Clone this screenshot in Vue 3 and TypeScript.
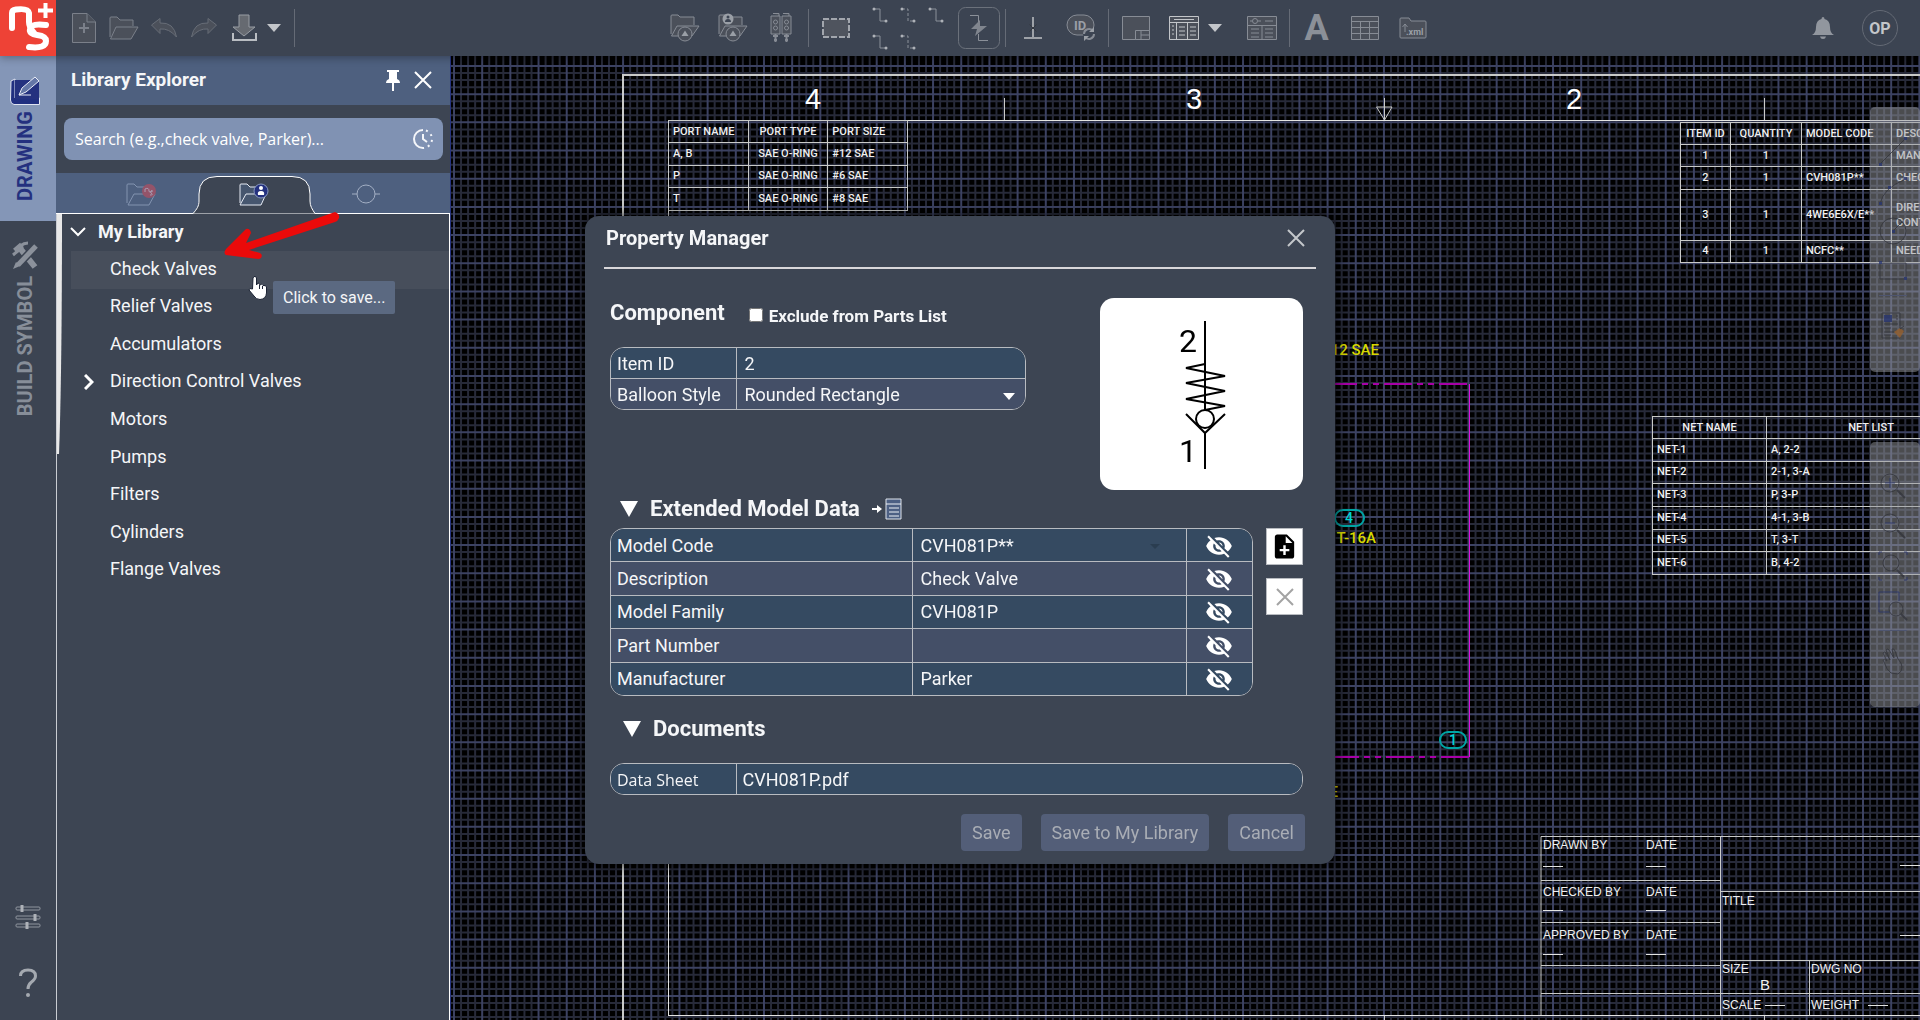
<script setup lang="ts">
import { ref } from 'vue'

interface TreeItem { name: string; branch?: boolean }
interface ModelRow { id: string; label: string; value: string }

const tree: TreeItem[] = [
  { name: 'Check Valves' },
  { name: 'Relief Valves' },
  { name: 'Accumulators' },
  { name: 'Direction Control Valves', branch: true },
  { name: 'Motors' },
  { name: 'Pumps' },
  { name: 'Filters' },
  { name: 'Cylinders' },
  { name: 'Flange Valves' },
]
const hovered = 'Check Valves'

const modelRows = ref<ModelRow[]>([
  { id: 'code', label: 'Model Code', value: 'CVH081P**' },
  { id: 'desc', label: 'Description', value: 'Check Valve' },
  { id: 'family', label: 'Model Family', value: 'CVH081P' },
  { id: 'part', label: 'Part Number', value: '' },
  { id: 'maker', label: 'Manufacturer', value: 'Parker' },
])

const search = ref('')
const exclude = ref(false)
const itemId = ref('2')
const balloon = ref('Rounded Rectangle')

const ports = [
  ['A, B', 'SAE O-RING', '#12 SAE'],
  ['P', 'SAE O-RING', '#6 SAE'],
  ['T', 'SAE O-RING', '#8 SAE'],
]
const parts = [
  ['1', '1', '', 'MANIFOLD'],
  ['2', '1', 'CVH081P**', 'CHECK VALVE'],
  ['3', '1', '4WE6E6X/E**', 'DIRECTIONAL CONTROL VALVE'],
  ['4', '1', 'NCFC**', 'NEEDLE VALVE'],
]
const nets = [
  ['NET-1', 'A, 2-2'],
  ['NET-2', '2-1, 3-A'],
  ['NET-3', 'P, 3-P'],
  ['NET-4', '4-1, 3-B'],
  ['NET-5', 'T, 3-T'],
  ['NET-6', 'B, 4-2'],
]

// Sheet grid: four fine divisions to each coarse one, on a 4096 px wide sheet.
const cell = 28.18
function gridPath(step: number, skip: number): string {
  let d = ''
  for (let i = 0; i * step < 4096; i++) {
    if (skip && i % skip === 0) continue
    const p = (i * step).toFixed(2)
    d += `M${p} -28V4096M-28 ${p}H4096`
  }
  return d
}
const fineGrid = gridPath(cell / 4, 4)
const coarseGrid = gridPath(cell, 0)
</script>

<template>
  <div class="app">
    <header class="topbar">
      <a class="logo" href="#" aria-label="Home">
        <svg width="56" height="56" viewBox="0 0 56 56" fill="none" stroke="#fff" stroke-linecap="round" stroke-linejoin="round">
          <path d="M12 28V13Q12 10 16 9.500Q28 8 29 13V22Q29 27 34 33" stroke-width="6" />
          <path d="M46 25Q31 23 30 29Q29 34 37 35Q46 36 46 41Q46 49 29 47" stroke-width="6" />
          <path d="M45.500 3V18M38 10.500H53" stroke-width="4" stroke-linecap="butt" />
        </svg>
      </a>
      <nav class="tools tools-file" aria-label="File">
        <button aria-label="New"><svg width="26" height="32" viewBox="0 0 26 32" class="dim"><path d="M1.500 1.500H16L24.500 10V30.500H1.500Z" /><path d="M16 1.500V10H24.500" /><path d="M13 11V21M8 16H18" stroke-width="2" /></svg></button>
        <button aria-label="Open"><svg width="32" height="26" viewBox="0 0 32 26" class="dim"><path d="M2 22V3Q2 2 3 2H9L12 5H25V11" /><path d="M8 12H30L23 24H2.500Z" /></svg></button>
        <button aria-label="Undo"><svg width="28" height="22" viewBox="0 0 28 22" class="dim faint"><path d="M1.500 8L10 1.500V6Q24 5 26.500 20Q19 11 10 12V16.500Z" /></svg></button>
        <button aria-label="Redo"><svg width="28" height="22" viewBox="0 0 28 22" class="dim faint"><path d="M26.500 8L18 1.500V6Q4 5 1.500 20Q9 11 18 12V16.500Z" /></svg></button>
        <button aria-label="Save"><svg width="28" height="28" viewBox="0 0 28 28"><path d="M9 1H19V13H25L14 22L3 13H9Z" fill="#666a71" stroke="#989da4" /><path d="M3 19V26H26V19" fill="none" stroke="#b9bdc2" stroke-width="2" /></svg></button>
        <button class="caret" aria-label="Save options"><svg width="14" height="8"><path d="M0 0H14L7 8Z" fill="#c3c6ca" /></svg></button>
        <span class="sep"></span>
      </nav>
      <nav class="tools tools-main" aria-label="Drawing tools">
        <button aria-label="Library folder"><svg width="32" height="32" viewBox="0 0 32 32" class="icn"><path d="M2 22V4Q2 3 3 3H9L11 5H25V13" /><path d="M8 14H30L23 24H2.500Z" /><circle cx="16" cy="22" r="7" /><path d="M12.500 24L16 18.500L19.500 24Z" class="solid" /></svg></button>
        <button aria-label="My library folder"><svg width="32" height="32" viewBox="0 0 32 32" class="icn"><path d="M2 22V4Q2 3 3 3H9L11 5H25V13" /><path d="M8 14H30L23 24H2.500Z" /><circle cx="16" cy="22" r="7" /><path d="M12.500 24L16 18.500L19.500 24Z" class="solid" /><circle cx="11" cy="7" r="5.500" class="solid" /><circle cx="11" cy="5" r="1.500" fill="#3c4452" stroke="none" /><path d="M8 10Q8 7 11 7Q14 7 14 10Z" fill="#3c4452" stroke="none" /></svg></button>
        <button aria-label="Manifold"><svg width="24" height="32" viewBox="0 0 24 32" class="icn"><path d="M2 4H11V22H2ZM13 4H22V22H13ZM4 1.500H10V4M14 1.500H20V4" /><circle cx="6.500" cy="10" r="2" /><circle cx="6.500" cy="16" r="2" /><circle cx="17.500" cy="10" r="2" /><circle cx="17.500" cy="16" r="2" /><path d="M6.500 22V30M17.500 22V30M4 24H9M15 24H20M5 28H8M16 28H19" stroke-width="2" /></svg></button>
        <span class="sep"></span>
        <button aria-label="Boundary"><svg width="30" height="22" viewBox="0 0 30 22"><rect x="2" y="2" width="26" height="18" fill="#4f545e" stroke="#a2a6ad" stroke-width="2" stroke-dasharray="6 2" /></svg></button>
        <div class="lines">
          <button v-for="n in 5" :key="n" :aria-label="'Line style ' + n">
            <svg width="16" height="16" viewBox="0 0 16 16"><path d="M2 2H8V14H14" fill="none" stroke="#8a9099" :stroke-dasharray="n === 2 || n === 5 ? '3 2' : undefined" /><circle cx="2" cy="2" r="1.500" fill="#aeb2b8" /><circle cx="14" cy="14" r="1.500" fill="#aeb2b8" /></svg>
          </button>
        </div>
        <button class="boxed" aria-label="Auto route"><svg width="42" height="42" viewBox="0 0 42 42" fill="none" stroke="#8b9099"><rect x=".5" y=".5" width="41" height="41" rx="7" stroke="#6b717b" /><path d="M12 8.500H20.500V15M20.500 27V33.500H30" /><path d="M22 13L13 22H19L17 29L29 19H22Z" fill="#80858e" stroke="none" /></svg></button>
        <span class="sep"></span>
        <button aria-label="Junction"><svg width="20" height="24" viewBox="0 0 20 24" fill="none"><path d="M10 1V22M1 22H19" stroke="#9ea2a8" stroke-width="2" /><path d="M6.500 8.500L13.500 15.500M13.500 8.500L6.500 15.500" stroke="#34383f" /></svg></button>
        <button aria-label="Refresh item IDs"><svg width="32" height="30" viewBox="0 0 32 30" class="icn"><rect x="2" y="2" width="27" height="20" rx="10" /><text x="9" y="17" class="idtext">ID</text><circle cx="24" cy="21" r="6" fill="#3c4452" stroke="none" /><path d="M19 21A5 5 0 0 1 28 18M29 21A5 5 0 0 1 20 24" fill="none" stroke-width="2" /><path d="M29 14V19H24ZM19 28V23H24Z" class="solid" /></svg></button>
        <span class="sep"></span>
        <button aria-label="Title block"><svg width="30" height="26" viewBox="0 0 30 26" class="icn"><path d="M1.500 1.500H28.500V24.500H1.500Z" /><path d="M14.500 24.500V15.500H28.500M20 16V24M20 20H28" /></svg></button>
        <button aria-label="Parts list"><svg width="32" height="26" viewBox="0 0 32 26" class="icn bright"><path d="M1.500 1.500H30.500V24.500H1.500ZM1.500 7.500H30.500M8.500 8V24M19.500 8V24" /><path d="M6 4.500H26M11 12H17M11 16H17M11 20H17M22 12H28M22 16H28M22 20H28M4 11H6M4 15H6M4 19H6" /></svg></button>
        <button class="caret list-caret" aria-label="Parts list options"><svg width="14" height="8"><path d="M0 0H14L7 8Z" fill="#c3c6ca" /></svg></button>
        <button aria-label="Symbol list"><svg width="32" height="26" viewBox="0 0 32 26" class="icn"><path d="M1.500 1.500H30.500V24.500H1.500ZM1.500 10.500H30.500M16 11V24" /><circle cx="9" cy="6" r="2.500" /><path d="M4 6H6M12 6H15M19 6H27M5 14H13M5 18H13M5 22H13M19 14H27M19 18H27M19 22H27" /></svg></button>
        <span class="sep"></span>
        <button class="letter" aria-label="Text">A</button>
        <button aria-label="Table"><svg width="30" height="26" viewBox="0 0 30 26" class="icn"><path d="M1.500 1.500H28.500V24.500H1.500ZM1.500 6.500H28.500M1.500 12.500H28.500M1.500 18.500H28.500M10.500 7V24M19.500 7V24" /></svg></button>
        <button aria-label="Export XML"><svg width="30" height="24" viewBox="0 0 30 24" class="icn"><path d="M2 3Q2 2 3 2H11L13 5H27Q28 5 28 6V21Q28 22 27 22H3Q2 22 2 21Z" /><path d="M7 16V8M4.500 11L7 8L9.500 11" /><text x="8" y="19" class="xmltext">.xml</text></svg></button>
      </nav>
      <nav class="tools tools-user" aria-label="Account">
        <button aria-label="Notifications"><svg width="24" height="24" viewBox="0 0 24 24" fill="#91969e"><path d="M12 1Q13.500 1 13.500 3Q19 4.500 19 11Q19 17 23 19H1Q5 17 5 11Q5 4.500 10.500 3Q10.500 1 12 1ZM9 20.500H15Q14.500 23 12 23Q9.500 23 9 20.500Z" /></svg></button>
        <button class="avatar">OP</button>
      </nav>
    </header>

    <div class="body">
      <nav class="rail" aria-label="Workspaces">
        <button class="rail-tab active">
          <svg width="32" height="30" viewBox="0 0 32 30"><path d="M2 5L6 3V22H30.500V28.500H5Q1.500 28 1.500 24Z" fill="#202f80" stroke="#dfe4f2" /><path d="M6 4H30V23H6Z" fill="#24317f" /><path d="M10 19L13 12L26 1L30 5L17 16Z" fill="#6476a6" stroke="#e9edf7" /><path d="M10 19H22" stroke="#e9edf7" /></svg>
          <span class="rail-text">DRAWING</span>
        </button>
        <button class="rail-tab">
          <svg width="30" height="30" viewBox="0 0 30 30" fill="none" stroke="#8b919b"><path d="M5 10L12 4M9 6L25 26" stroke-width="6" /><path d="M3 14L9 9M10 5Q14 2 18 2" stroke-width="3" /><path d="M26 5L8 24" stroke="#3c4452" stroke-width="8" /><path d="M26 5L8 24" stroke-width="5" /><path d="M3 28L6 21L10 25Z" fill="#8b919b" stroke="none" /></svg>
          <span class="rail-text">BUILD SYMBOL</span>
        </button>
        <span class="rail-gap"></span>
        <button class="rail-btn" aria-label="Settings"><svg width="26" height="26" viewBox="0 0 26 26" fill="none" stroke="#8f959e"><rect x="1" y="3" width="24" height="3" rx="1" /><rect x="1" y="12" width="24" height="3" rx="1" /><rect x="1" y="20" width="24" height="3" rx="1" /><path d="M7 1V8M20 10V17M12 18V25" stroke="#aeb2b8" stroke-width="3" /></svg></button>
        <button class="rail-btn" aria-label="Help"><svg width="20" height="30" viewBox="0 0 20 30"><path d="M2.500 8Q2.500 2 10 2Q17.500 2 17.500 8Q17.500 11 13 14.500Q10 17 10 21" fill="none" stroke="#a4a9b0" stroke-width="3" /><circle cx="10" cy="27" r="2" fill="#a4a9b0" /></svg></button>
      </nav>

      <aside class="panel">
        <div class="panel-head">
          <h2>Library Explorer</h2>
          <button aria-label="Pin"><svg width="16" height="22" viewBox="0 0 16 22"><path d="M2 1H14V3H12V10Q15 11 15 14H9V22H7V14H1Q1 11 4 10V3H2Z" fill="#fff" /></svg></button>
          <button aria-label="Close panel"><svg width="18" height="18" viewBox="0 0 18 18"><path d="M1 1L17 17M17 1L1 17" stroke="#fff" stroke-width="2" /></svg></button>
        </div>
        <div class="search">
          <input v-model="search" type="text" aria-label="Search library" placeholder="Search (e.g.,check valve, Parker)..." />
          <button aria-label="Recent searches"><svg width="22" height="22" viewBox="0 0 22 22" fill="none" stroke="#f4f6fa" stroke-width="2"><path d="M11 2A9 9 0 0 0 11 20" /><path d="M11 2A9 9 0 0 1 11 20" stroke-dasharray="2 4" stroke-dashoffset="-3" /><path d="M11 6V11L15 14" /></svg></button>
        </div>
        <div class="tabs">
          <svg class="tab-shape" width="122" height="41" viewBox="0 0 122 41"><path d="M0 40.500C4 36 6 33 6 28V21Q6 3.500 24 3.500H99Q117 3.500 117 21V28C117 33 119 36 122 40.500" fill="#3d4553" stroke="#fff" /></svg>
          <button aria-label="Standard library"><svg width="34" height="26" viewBox="0 0 34 26" fill="none" stroke="#8293b0"><path d="M2 22V4Q2 3 3 3H9L12 6H25V12M9 13H30L24 24H3Z" /><circle cx="24" cy="10" r="7" fill="#94546a" stroke="none" /><path d="M20 11V8Q24 6 24 10Q25 13 27 9M28 10Q24 10 26 12Q29 14 25 14" stroke="#a99bb0" /></svg></button>
          <button aria-label="My library"><svg width="34" height="26" viewBox="0 0 34 26" fill="none" stroke="#e6ebf5"><path d="M3 22V4Q3 3 4 3H10L13 6H26V12M9 13H29L24 24H3Z" fill="#46566f" /><circle cx="24" cy="10" r="7" fill="#24317f" stroke="#8796bd" /><circle cx="24" cy="7" r="2" fill="#fff" stroke="none" /><path d="M21 14Q20 10 24 10Q28 10 27 14Z" fill="#fff" stroke="none" /></svg></button>
          <button aria-label="Symbols"><svg width="30" height="20" viewBox="0 0 30 20" fill="none" stroke="#a3afc4"><circle cx="15" cy="10" r="9" /><path d="M1 10H6M24 10H29" /></svg></button>
        </div>
        <div class="tree">
          <svg class="thumb" width="7" height="240" viewBox="0 0 7 240"><path d="M1 0H6Q6 160 3 240H1Z" fill="#e8e8e8" /></svg>
          <button class="tree-root">
            <svg width="16" height="10" viewBox="0 0 16 10"><path d="M1 1L8 8L15 1" fill="none" stroke="#fff" stroke-width="2" /></svg>
            My Library
          </button>
          <ul>
            <li v-for="item in tree" :key="item.name" :class="{ hover: item.name === hovered }">
              <button>
                <svg v-if="item.branch" width="10" height="16" viewBox="0 0 10 16"><path d="M1 1L8 8L1 15" fill="none" stroke="#fff" stroke-width="3" /></svg>
                {{ item.name }}
              </button>
            </li>
          </ul>
          <div class="tip" role="tooltip">Click to save...</div>
          <svg class="pointer" width="20" height="26" viewBox="0 0 20 26"><path d="M6 1.500Q8 1 8.500 3V10L10 8Q11.500 8 12 10Q14 8 15 10.500Q18 10 18.500 12V18Q18 24 12 24.500Q8 24.500 6 21L1 15Q1 12.500 4.500 14L5 3Z" fill="#fff" stroke="#1d2435" /><path d="M11.500 10V14M14.500 11V14" stroke="#1d2435" /></svg>
          <svg class="arrow" width="120" height="54" viewBox="0 0 120 54"><path d="M112 5Q117 7 116 11Q115 14 112 15L26 43L37 46Q40 48 38 51L36 52L3 48Q0 46 3 42L23 22Q27 21 28 26L23 36Z" fill="#ea0a0a" /></svg>
        </div>
      </aside>

      <main class="canvas">
        <svg class="sheet" width="100%" height="100%">
          <g transform="translate(-451 -56)">
            <g transform="translate(454 66)">
              <path :d="fineGrid" stroke="#272a39" stroke-width="2" />
              <path :d="coarseGrid" stroke="#3c4262" stroke-width="2" />
            </g>
            <g fill="none" stroke="#c9cac8">
              <path d="M623 1020V75H2400" stroke-width="2" />
              <path d="M668.500 1015V120.500H2400M668 1015.500H2400" stroke="#e4e4e2" />
              <path d="M1004.500 98V120M1384.500 98V120M1764.500 98V120M1376.500 107H1392L1384.500 120ZM1384.500 1016V1020M1764.500 1016V1020" />
              <path d="M1541 1015V836.500H2100M1720.500 836V1015M1541 880.500H1720M1541 922.500H1720M1541 965.500H1720M1541 993.500H2100M1720 891.500H2100M1720 960.500H2100M1809.500 960V1015" />
              <path d="M1543 866.500H1563M1646 866.500H1666M1543 910.500H1563M1646 910.500H1666M1543 954.500H1563M1646 954.500H1666M1900 865.500H1920M1900 935.500H1920M1765 1005.500H1785M1868 1005.500H1888" stroke="#e4e4e2" />
            </g>
            <g class="zone">
              <text x="813" y="109">4</text><text x="1194" y="109">3</text><text x="1574" y="109">2</text>
            </g>
            <g class="block">
              <text x="1543" y="849">DRAWN BY</text><text x="1646" y="849">DATE</text>
              <text x="1543" y="896">CHECKED BY</text><text x="1646" y="896">DATE</text>
              <text x="1543" y="939">APPROVED BY</text><text x="1646" y="939">DATE</text>
              <text x="1722" y="905">TITLE</text><text x="1722" y="973">SIZE</text>
              <text x="1811" y="973">DWG NO</text><text x="1722" y="1009">SCALE</text>
              <text x="1811" y="1009">WEIGHT</text><text x="1760" y="990" class="size-b">B</text>
            </g>
            <path d="M1469.500 384V757" stroke="#e010e0" />
            <path d="M1467 384H1200M1469 757H1200" stroke="#a800a8" stroke-width="2" stroke-dasharray="28 5 6 5 6 5" />
            <g fill="none" stroke="#00a5a5" stroke-width="2">
              <rect x="1335" y="510" width="29" height="16" rx="8" /><rect x="1440" y="732" width="26" height="16" rx="8" />
            </g>
            <g class="bal"><text x="1349" y="523">4</text><text x="1453" y="745">1</text></g>
            <g class="note"><text x="1379" y="355">#12 SAE</text><text x="1376" y="543">T-16A</text><text x="1338" y="797">#8 SAE</text></g>
          </g>
        </svg>

        <table class="cad port-table">
          <thead><tr><th>PORT NAME</th><th>PORT TYPE</th><th>PORT SIZE</th></tr></thead>
          <tbody><tr v-for="r in ports" :key="r[0]"><td v-for="(c, i) in r" :key="i">{{ c }}</td></tr></tbody>
        </table>
        <table class="cad parts-table">
          <thead><tr><th>ITEM ID</th><th>QUANTITY</th><th>MODEL CODE</th><th>DESCRIPTION</th></tr></thead>
          <tbody><tr v-for="r in parts" :key="r[0]" :class="{ tall: r[0] === '3' }"><td v-for="(c, i) in r" :key="i">{{ c }}</td></tr></tbody>
        </table>
        <table class="cad net-table">
          <thead><tr><th>NET NAME</th><th>NET LIST</th></tr></thead>
          <tbody><tr v-for="r in nets" :key="r[0]"><td v-for="(c, i) in r" :key="i">{{ c }}</td></tr></tbody>
        </table>

        <div class="float draw-tools">
          <button aria-label="Line"><svg width="30" height="30" viewBox="0 0 30 30"><path d="M2 28L28 2" /><path d="M1 27H4V30H1ZM26 1H29V4H26Z" class="dot" /></svg></button>
          <button aria-label="Arc"><svg width="30" height="30" viewBox="0 0 30 30"><path d="M2 28Q5 12 28 3" /><path d="M1 26H4V29H1ZM10 10H13V13H10ZM26 1H29V4H26Z" class="dot" /></svg></button>
          <button aria-label="Circle"><svg width="30" height="30" viewBox="0 0 30 30"><circle cx="15" cy="15" r="13" /><path d="M15 15L24 6" /><path d="M14 14H17V17H14Z" class="dot" /></svg></button>
          <button aria-label="Rectangle"><svg width="30" height="22" viewBox="0 0 30 22"><path d="M2 3H28V19H2Z" /><path d="M1 1H4V4H1ZM26 17H29V20H26Z" class="dot" /></svg></button>
          <span class="rule"></span>
          <button aria-label="Format painter"><svg width="28" height="30" viewBox="0 0 28 30"><path d="M3 2H21V27H3ZM5 13H19M5 17H12M5 21H15M5 24H12M17 5H19M17 8H19" /><path d="M5 4H13V11H5Z" class="dot" /><path d="M15 21L21 17L25 20L21 27Z" fill="#96602f" stroke="none" /><path d="M21 18L25 15" /></svg></button>
        </div>
        <div class="float zoom-tools">
          <button aria-label="Zoom in"><svg width="30" height="30" viewBox="0 0 30 30"><circle cx="12" cy="12" r="9" /><path d="M19 19L27 27" stroke-width="2" /><path d="M12 7V17M7 12H17" stroke="#28356f" /></svg></button>
          <button aria-label="Zoom out"><svg width="30" height="30" viewBox="0 0 30 30"><circle cx="12" cy="12" r="9" /><path d="M19 19L27 27" stroke-width="2" /><path d="M7 12H17" stroke="#28356f" /></svg></button>
          <button aria-label="Zoom to fit"><svg width="30" height="30" viewBox="0 0 30 30"><circle cx="13" cy="12" r="8" /><path d="M19 19L26 26" stroke-width="2" /><path d="M1 4V1H4M26 1H29V4M1 26V29H4M26 29H29V26" stroke="#28356f" /></svg></button>
          <button aria-label="Zoom window"><svg width="30" height="30" viewBox="0 0 30 30"><path d="M12 21H1V1H21V10" stroke="#28356f" /><circle cx="18" cy="18" r="7" /><path d="M23 23L29 29" stroke-width="2" /></svg></button>
          <span class="rule"></span>
          <button aria-label="Pan"><svg width="22" height="28" viewBox="0 0 22 28"><path d="M9 26Q4 22 3 17L1 13Q2 11 5 14L1 6Q2 4 4 6L8 13L4 3Q6 1 7 3L12 11L10 2Q12 1 13 4L16 12Q20 16 20 20Q20 25 16 27Z" /></svg></button>
        </div>
      </main>
    </div>

    <div class="overlay">
      <section class="dialog" role="dialog" aria-labelledby="pm-title">
        <header class="dialog-head">
          <h1 id="pm-title">Property Manager</h1>
          <button aria-label="Close"><svg width="18" height="18" viewBox="0 0 18 18"><path d="M1 1L17 17M17 1L1 17" stroke="#c4c7cb" stroke-width="2" /></svg></button>
        </header>
        <div class="dialog-body">
          <div class="component">
            <div class="component-data">
              <div class="component-title">
                <h2>Component</h2>
                <input id="exclude" v-model="exclude" type="checkbox" />
                <label for="exclude">Exclude from Parts List</label>
              </div>
              <div class="frame">
                <table class="grid item-grid">
                  <tbody>
                    <tr><th scope="row"><label for="item-id">Item ID</label></th><td><input id="item-id" v-model="itemId" type="text" /></td></tr>
                    <tr>
                      <th scope="row"><label for="balloon">Balloon Style</label></th>
                      <td>
                        <div class="picker">
                          <select id="balloon" v-model="balloon"><option>Rounded Rectangle</option><option>Circle</option></select>
                          <svg width="12" height="7"><path d="M0 0H12L6 7Z" fill="#fff" /></svg>
                        </div>
                      </td>
                    </tr>
                  </tbody>
                </table>
              </div>
            </div>
            <div class="preview">
              <svg width="203" height="192" viewBox="0 0 203 192" fill="none" stroke="#000" stroke-width="2">
                <path d="M105 23V112M105 134V171" />
                <path d="M105 66L86 70L125 78L86 85L125 93L86 101L125 108L105 112" />
                <circle cx="105" cy="121" r="9" />
                <path d="M86 116L105 135L125 116" />
                <text x="79" y="54">2</text><text x="79" y="164">1</text>
              </svg>
            </div>
          </div>

          <div class="section-title">
            <button aria-label="Collapse extended model data"><svg width="18" height="16"><path d="M0 0H18L9 16Z" fill="#fff" /></svg></button>
            <h2>Extended Model Data</h2>
            <button aria-label="Insert field"><svg width="30" height="22" viewBox="0 0 30 22"><path d="M0 10H5V7L10 11L5 15V12H0Z" fill="#fff" /><path d="M14 1H29V21H14Z" fill="#4d6084" stroke="#dfe4ec" /><path d="M14 6H29M17 10H27M17 14H27M17 18H27" stroke="#eef1f6" /></svg></button>
          </div>
          <div class="model">
            <div class="frame">
              <table class="grid model-grid">
                <tbody>
                  <tr v-for="row in modelRows" :key="row.id">
                    <th scope="row"><label :for="row.id">{{ row.label }}</label></th>
                    <td>
                      <div class="picker">
                        <input :id="row.id" v-model="row.value" type="text" />
                        <svg v-if="row.id === 'code'" width="10" height="5"><path d="M0 0H10L5 5Z" fill="#2a3d50" /></svg>
                      </div>
                    </td>
                    <td class="eye">
                      <button :aria-label="'Show ' + row.label">
                        <svg width="28" height="28" viewBox="0 0 24 24" fill="#fff"><path d="M12 7c2.760 0 5 2.240 5 5 0 .65-.13 1.260-.36 1.830l2.920 2.920c1.510-1.260 2.700-2.890 3.430-4.750-1.730-4.390-6-7.500-11-7.500-1.400 0-2.740.25-3.980.7l2.160 2.160C10.740 7.130 11.350 7 12 7zM2 4.270l2.280 2.280.46.46C3.080 8.300 1.780 10.020 1 12c1.730 4.390 6 7.500 11 7.500 1.550 0 3.030-.3 4.380-.84l.42.42L19.730 22 21 20.730 3.270 3 2 4.270zM7.530 9.800l1.550 1.550c-.05.21-.08.43-.08.65 0 1.660 1.340 3 3 3 .22 0 .44-.03.65-.08l1.550 1.550c-.67.33-1.410.53-2.200.53-2.760 0-5-2.240-5-5 0-.79.2-1.530.53-2.200zm4.310-.78l3.150 3.150.02-.16c0-1.660-1.340-3-3-3l-.17.01z" /></svg>
                      </button>
                    </td>
                  </tr>
                </tbody>
              </table>
            </div>
            <div class="side">
              <button aria-label="Add field"><svg width="29" height="29" viewBox="0 0 24 24"><path d="M14 2H6c-1.100 0-1.990.9-1.990 2L4 20c0 1.100.89 2 1.990 2H18c1.100 0 2-.9 2-2V8l-6-6zm2 14h-3v3h-2v-3H8v-2h3v-3h2v3h3v2zm-3-7V3.500L18.500 9H13z" /></svg></button>
              <button aria-label="Remove field"><svg width="18" height="18" viewBox="0 0 18 18"><path d="M1 1L17 17M17 1L1 17" stroke="#a3a3a3" stroke-width="2" /></svg></button>
            </div>
          </div>

          <div class="section-title docs-title">
            <button aria-label="Collapse documents"><svg width="18" height="16"><path d="M0 0H18L9 16Z" fill="#fff" /></svg></button>
            <h2>Documents</h2>
          </div>
          <div class="frame">
            <table class="grid docs-grid">
              <tbody><tr><th scope="row">Data Sheet</th><td><a href="#">CVH081P.pdf</a></td></tr></tbody>
            </table>
          </div>
          <footer class="actions">
            <button>Save</button>
            <button>Save to My Library</button>
            <button>Cancel</button>
          </footer>
        </div>
      </section>
    </div>
  </div>
</template>

<style>
body { background: #000; overflow: hidden; }
</style>

<style scoped>
* { box-sizing: border-box; }
.app { display: flex; flex-direction: column; height: 100vh; font-family: Roboto, "Liberation Sans", sans-serif; font-size: 18px; color: #f5f6f8; }
button { padding: 0; border: 0; background: none; color: inherit; font: inherit; cursor: pointer; }
h1, h2 { margin: 0; font-weight: 700; }
svg { display: block; flex: none; }

.topbar { display: flex; height: 56px; flex: none; background: #3c4452; position: relative; z-index: 2; box-shadow: 0 2px 8px rgba(0, 0, 0, .3); }
.logo { width: 56px; height: 56px; background: #ee4236; }
.tools { display: flex; align-items: center; }
.tools button { display: flex; align-items: center; justify-content: center; height: 100%; }
.tools-file { padding-left: 8px; }
.tools-file button { width: 40px; }
.tools-file .caret { width: 20px; }
.tools-file .sep { margin-left: 10px; }
.tools-main { margin: 0 auto; }
.tools-main button { width: 48px; }
.tools-main .boxed { width: 46px; }
.tools-main .list-caret { width: 30px; justify-content: flex-start; }
.tools .letter { font-size: 36px; font-weight: 700; color: #8b9098; }
.sep { width: 1px; height: 38px; margin: 0 3px; background: #656b76; }
.lines { display: grid; grid-template-columns: repeat(3, 28px); grid-auto-rows: 27px; padding: 0 6px; }
.tools-main .lines button { width: 28px; height: 27px; }
.dim { fill: #4b505a; stroke: #7b808a; }
.dim.faint { stroke: #676d77; }
.icn { fill: #4b505a; stroke: #878c95; }
.icn.bright { stroke: #c2c5c9; }
.solid { fill: #9a9fa6; stroke: none; }
.idtext { font: 700 13px Roboto, sans-serif; fill: #9a9fa6; stroke: none; }
.xmltext { font: 700 9px Roboto, sans-serif; fill: #9a9fa6; stroke: none; }
.tools-user { gap: 27px; padding: 0 22px 0 12px; }
.tools-user .avatar { width: 36px; height: 36px; border: 1px solid #646a75; border-radius: 50%; font-size: 16px; font-weight: 700; color: #c3c6ca; }

.body { display: flex; flex: 1; min-height: 0; }
.rail { display: flex; flex-direction: column; width: 56px; background: #3c4452; }
.rail-tab { display: flex; flex-direction: column; align-items: center; gap: 5px; padding: 20px 6px 0 0; color: #878e99; }
.rail-tab.active { height: 165px; background: #8496b7; color: #24317f; }
.rail-text { writing-mode: vertical-rl; transform: rotate(180deg); font-size: 20px; font-weight: 700; line-height: 24px; }
.rail-gap { flex: 1; }
.rail-btn { display: flex; align-items: center; justify-content: center; height: 66px; }
.rail-btn:last-child { margin-bottom: 4px; }

.panel { width: 395px; display: flex; flex-direction: column; background: #3d4553; border-right: 1px solid #26337f; }
.panel-head { display: flex; align-items: center; gap: 13px; height: 49px; padding: 0 18px 2px 15px; background: #4e607f; }
.panel-head h2 { flex: 1; font-size: 19px; line-height: 24px; }
.search { display: flex; align-items: center; height: 42px; margin: 13px 7px 13px 8px; padding: 0 9px 0 11px; border-radius: 8px; background: #8092b3; }
.search input { flex: 1; min-width: 0; border: 0; outline: 0; padding: 0; background: none; color: #fff; font: 16px "Open Sans", "Noto Sans", sans-serif; }
.search input::placeholder { color: #fff; opacity: 1; }
.tabs { position: relative; display: flex; justify-content: space-between; height: 41px; padding: 0 67px 0 69px; background: #4e607f; border-bottom: 1px solid #fff; }
.tabs button { display: flex; align-items: center; justify-content: center; position: relative; width: 34px; margin-top: 2px; }
.tab-shape { position: absolute; left: 137px; top: 0; }
.tree { position: relative; flex: 1; border-left: 1px solid #c9ccd2; border-right: 1px solid #fff; padding: 0 0 0 13px; }
.thumb { position: absolute; left: -1px; top: 0; }
.tree-root { display: flex; align-items: center; gap: 12px; height: 37px; padding-bottom: 2px; font-weight: 700; }
.tree ul { display: grid; grid-auto-rows: 1fr; height: 338px; margin: 0 0 0 1px; padding: 0; list-style: none; }
.tree li { display: flex; }
.tree li.hover { background: #474e5b; }
.tree li button { position: relative; width: 100%; padding: 0 0 2px 39px; text-align: left; }
.tree li svg { position: absolute; left: 13px; top: 50%; margin-top: -8px; }
.tree-root, .tree li button { line-height: 24px; white-space: nowrap; }
.tip { position: absolute; left: 216px; top: 67px; height: 33px; padding: 0 10px; border-radius: 2px; background: #5b6981; font-size: 16px; line-height: 33px; white-space: nowrap; }
.pointer { position: absolute; left: 191px; top: 61px; }
.arrow { position: absolute; left: 166px; top: -7px; z-index: 1; }

.canvas { position: relative; flex: 1; min-width: 0; overflow: hidden; background: #000; }
.sheet { position: absolute; inset: 0; }
.zone { font: 29px "Liberation Sans", sans-serif; fill: #fff; text-anchor: middle; }
.block { font: 12px "Liberation Sans", sans-serif; fill: #f0f0f0; }
.block .size-b { font-size: 15px; }
.note { font: 500 15px Roboto, sans-serif; fill: #d8d800; text-anchor: end; }
.bal { font: 500 14px Roboto, sans-serif; fill: #00d5d5; text-anchor: middle; }
.cad { position: absolute; border-collapse: collapse; table-layout: fixed; font-size: 11px; font-weight: 500; line-height: 14px; color: #f0f0f0; }
.cad th, .cad td { border: 1px solid #c9cac8; padding: 0 4px; font-weight: 500; text-align: left; white-space: nowrap; height: 22px; }
.port-table { left: 217px; top: 64px; width: 240px; height: 91px; }
.port-table th:nth-child(2), .port-table td:nth-child(2) { text-align: center; }
.parts-table { left: 1229px; top: 66px; width: 330px; height: 141px; }
.parts-table th:nth-child(1) { width: 50px; }
.parts-table th:nth-child(2) { width: 71px; }
.parts-table th:nth-child(3) { width: 90px; }
.parts-table th:nth-child(-n+2), .parts-table td:nth-child(-n+2) { padding: 0; text-align: center; }
.parts-table .tall td { height: 50px; }
.parts-table .tall td:last-child { white-space: normal; line-height: 15px; padding-right: 28px; }
.net-table { left: 1201px; top: 360px; width: 324px; height: 159px; }
.net-table th { text-align: center; }
.net-table th:first-child { width: 114px; }
.float { position: absolute; right: 0; width: 50px; height: 265px; padding: 24px 5px 0 0; display: flex; flex-direction: column; align-items: center; border-radius: 5px; background: rgba(150, 152, 158, .5); }
.float button { display: flex; align-items: center; justify-content: center; width: 40px; height: 40px; }
.float svg { fill: none; stroke: #33353c; opacity: .8; }
.float .dot { fill: #28356f; stroke: none; }
.float .rule { width: 28px; height: 1px; margin: 4px 0 10px; background: #4e5570; }
.draw-tools { top: 51px; }
.zoom-tools { top: 386px; }

.overlay { position: fixed; inset: 0; z-index: 3; display: flex; justify-content: center; align-items: center; padding-top: 60px; pointer-events: none; }
.dialog { pointer-events: auto; width: 750px; border-radius: 14px; background: #3d4553; box-shadow: 0 0 14px rgba(0, 0, 0, .8); }
.dialog-head { display: flex; justify-content: space-between; height: 53px; margin: 0 19px; padding: 0 11px 7px 2px; align-items: center; border-bottom: 2px solid #d9d7da; }
.dialog-head h1 { font-size: 20px; line-height: 24px; }
.dialog-body { padding: 29px 32px 13px 25px; }
.component { display: flex; justify-content: space-between; }
.component-title { display: flex; align-items: center; height: 30px; margin-bottom: 19px; }
.component-title h2, .section-title h2 { font-size: 22px; line-height: 28px; }
.component-title input { width: 14px; height: 14px; margin: 4px 6px 0 24px; }
.component-title label { font-size: 17px; font-weight: 700; line-height: 20px; margin-top: 5px; }
.frame { overflow: hidden; border: 1px solid #b8bbc0; border-radius: 14px; }
.grid { width: 100%; border-collapse: collapse; line-height: 24px; }
.grid th, .grid td { padding: 1px 0 0; border: 0 solid #b8bbc0; font-weight: 400; text-align: left; }
.grid th { padding-left: 6px; }
.grid td { border-left-width: 1px; }
.grid tr + tr > * { border-top-width: 1px; }
.grid tr:nth-child(odd) { background: #354a61; }
.grid tr:nth-child(even) { background: #444f67; }
.grid input, .grid select { display: block; width: 100%; height: 24px; padding: 0 0 0 8px; border: 0; outline: 0; background: none; color: inherit; font: inherit; line-height: 24px; appearance: none; }
.picker { position: relative; }
.picker svg { position: absolute; right: 10px; top: 10px; }
.item-grid { width: 414px; height: 61px; }
.item-grid th, .docs-grid th { width: 125px; }
.model { display: flex; justify-content: space-between; }
.model-grid { width: 641px; height: 166px; }
.model-grid th { width: 301px; }
.model-grid .picker svg { right: 26px; }
.model-grid .eye { width: 66px; }
.eye button { display: flex; justify-content: center; width: 100%; }
.side { display: flex; flex-direction: column; gap: 13px; }
.side button { display: flex; align-items: center; justify-content: center; width: 37px; height: 37px; background: #fff; border: 1px solid #b8bbc0; }
.preview { width: 203px; height: 192px; border-radius: 14px; background: #fff; }
.preview text { font: 400 32px Roboto, sans-serif; fill: #000; stroke: none; }
.section-title { display: flex; align-items: center; gap: 12px; height: 28px; margin: 5px 0 5px 10px; }
.docs-title { margin: 19px 0 20px 13px; }
.docs-grid { height: 30px; }
.docs-grid th { font-family: "Open Sans", "Noto Sans", sans-serif; font-size: 16px; }
.docs-grid td { padding-left: 6px; }
.docs-grid a { color: inherit; text-decoration: none; }
.actions { display: flex; justify-content: flex-end; gap: 19px; margin: 19px -2px 0 0; }
.actions button { height: 37px; padding: 0 11px; border-radius: 4px; background: #535e78; color: #a9adb5; }
</style>
